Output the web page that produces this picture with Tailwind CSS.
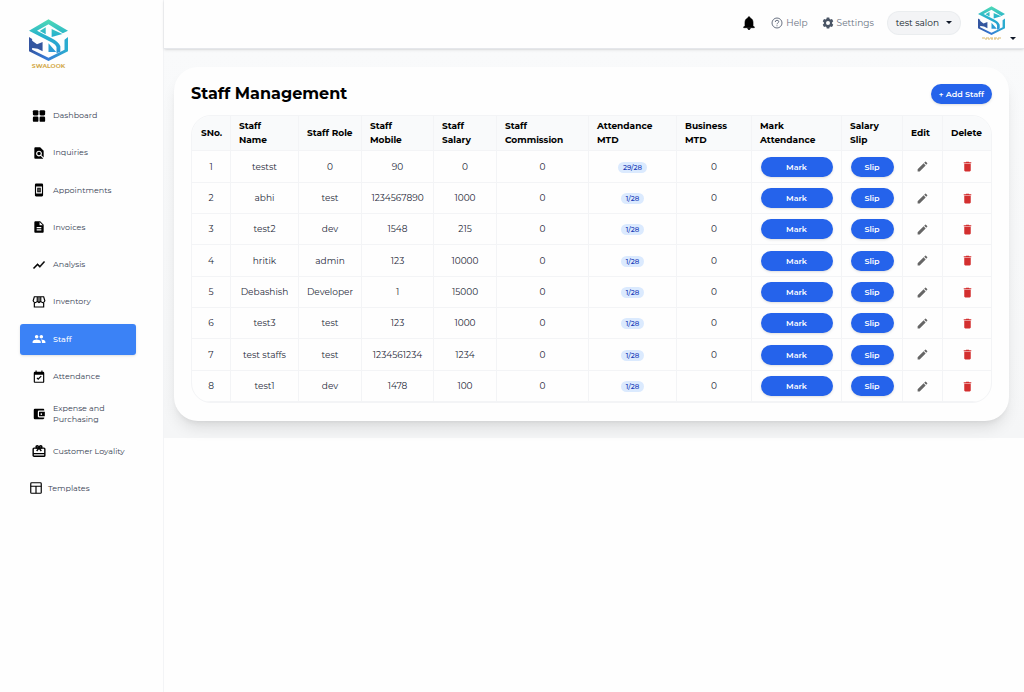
<!DOCTYPE html>
<html lang="en">
<head>
<meta charset="utf-8">
<title>Staff Management</title>
<script src="https://cdn.jsdelivr.net/npm/@tailwindcss/browser@4"></script>
</head>
<body class="min-h-screen bg-[#fefefe] font-['Montserrat','Inter',sans-serif] text-[9px] text-gray-800">
<svg class="absolute size-0" aria-hidden="true">
  <defs>
    <linearGradient id="brand" x1="0" y1="0" x2="0" y2="124" gradientUnits="userSpaceOnUse">
      <stop offset="0" stop-color="#52dcb4"/><stop offset=".4" stop-color="#27b2cc"/><stop offset=".7" stop-color="#279fd2"/><stop offset="1" stop-color="#3c86dc"/>
    </linearGradient>
    <linearGradient id="brandEdge" x1="0" y1="0" x2="112" y2="0" gradientUnits="userSpaceOnUse">
      <stop offset="0" stop-color="#34549f"/><stop offset=".45" stop-color="#3579d6"/><stop offset="1" stop-color="#2bb0cf"/>
    </linearGradient>
    <symbol id="logo" viewBox="0 0 112 126" preserveAspectRatio="none">
      <path fill="url(#brand)" d="M0 35 56 1l56 34-15 8-41-27-33 19 42 23q20 10 25 24v16l-11 5V84q-2-8-12-13z"/>
      <path fill="url(#brand)" d="M31 36l17-11v21zM65 30v24l31-9zM56 73v26h22z"/>
      <path fill="url(#brandEdge)" d="M0 54l9 6v32l47 24 46-24V62l10-8v43l-56 29L0 97z"/>
      <path fill="#34569f" d="M5 62l18 14 16-7v28l-14-8-20-3z"/>
    </symbol>
    <symbol id="pencil" viewBox="0 0 24 24"><path fill="currentColor" d="M3 17.25V21h3.75L17.81 9.94l-3.75-3.75zM20.71 7.04a1 1 0 0 0 0-1.41l-2.34-2.34a1 1 0 0 0-1.41 0l-1.83 1.83 3.75 3.75z"/></symbol>
    <symbol id="trash" viewBox="0 0 24 24"><path fill="currentColor" d="M6 19c0 1.100.9 2 2 2h8c1.100 0 2-.9 2-2V7H6zM19 4h-3.500l-1-1h-5l-1 1H5v2h14z"/></symbol>
  </defs>
</svg>

<div class="flex min-h-screen">
  <aside class="w-[164px] shrink-0 border-r border-gray-100 bg-[#fefefe]">
    <a href="#" class="ml-[29px] mt-[19px] flex w-[39px] flex-col items-center" aria-label="Swalook home">
      <svg class="h-[42px] w-[39px]"><use href="#logo"/></svg>
      <span class="mt-px text-[6px] leading-[8px] font-bold text-[#d3aa4b]">SWALOOK</span>
    </a>
    <nav class="mt-[30px] mr-[27px] ml-[20px] flex h-[404px] flex-col justify-between text-[8px] leading-[11px] text-gray-700">
      <a href="#" class="flex h-[31px] items-center gap-[7px] pl-[12px]">
        <svg class="size-[14px] shrink-0 text-black" viewBox="0 0 24 24" fill="currentColor"><rect x="1.500" y="2" width="9.500" height="9" rx="2"/><rect x="13" y="2" width="9.500" height="9" rx="2"/><rect x="1.500" y="13" width="9.500" height="9" rx="2"/><rect x="13" y="13" width="9.500" height="9" rx="2"/></svg>Dashboard</a>
      <a href="#" class="flex h-[31px] items-center gap-[7px] pl-[12px]">
        <svg class="size-[14px] shrink-0 text-black" viewBox="0 0 24 24" fill="currentColor"><path d="M20 19.590V8l-6-6H6c-1.100 0-1.990.9-1.990 2L4 20c0 1.100.89 2 1.990 2H18c.45 0 .85-.15 1.190-.4l-4.430-4.430c-.8.520-1.740.830-2.760.830-2.760 0-5-2.240-5-5s2.240-5 5-5 5 2.240 5 5c0 1.020-.31 1.960-.83 2.750zM9 13c0 1.660 1.340 3 3 3s3-1.340 3-3-1.340-3-3-3-3 1.340-3 3"/></svg>Inquiries</a>
      <a href="#" class="flex h-[31px] items-center gap-[7px] pl-[12px]">
        <svg class="size-[14px] shrink-0 text-black" viewBox="0 0 24 24" fill="currentColor"><path fill-rule="evenodd" d="M17 1H7a2 2 0 0 0-2 2v18c0 1.100.9 2 2 2h10a2 2 0 0 0 2-2V3a2 2 0 0 0-2-2M7 18V6h10v12zM9 8v8h6V8zm2 2h2v1h-2zm0 3h2v1h-2z"/></svg>Appointments</a>
      <a href="#" class="flex h-[31px] items-center gap-[7px] pl-[12px]">
        <svg class="size-[14px] shrink-0 text-black" viewBox="0 0 24 24" fill="currentColor"><path d="M14 2H6c-1.100 0-1.990.9-1.990 2L4 20c0 1.100.89 2 1.990 2H18c1.100 0 2-.9 2-2V8zm2 16H8v-2h8zm0-4H8v-2h8zm-3-5V3.500L18.500 9z"/></svg>Invoices</a>
      <a href="#" class="flex h-[31px] items-center gap-[7px] pl-[12px]">
        <svg class="size-[14px] shrink-0 text-black" viewBox="0 0 24 24" fill="currentColor" stroke="currentColor" stroke-width=".7"><path d="m3.500 18.490 6-6.010 4 4L22 6.920l-1.410-1.410-7.090 7.970-4-4L2 16.990z"/></svg>Analysis</a>
      <a href="#" class="flex h-[31px] items-center gap-[7px] pl-[12px]">
        <svg class="size-[14px] shrink-0 text-black" viewBox="0 0 24 24" fill="none" stroke="currentColor" stroke-width="2"><path d="M4 12v8.500h16V12M4 3h16l2 7q-1 3-3.500 3T15 10.500q-1 2.500-3 2.500t-3-2.500Q8 13 5.500 13T2 10zM9 3v8M12 3v9M15 3v8"/></svg>Inventory</a>
      <a href="#" aria-current="page" class="flex h-[31px] items-center gap-[7px] rounded-[3px] bg-[#3b82f6] pl-[12px] font-medium text-white shadow-sm">
        <svg class="size-[14px] shrink-0" viewBox="0 0 24 24" fill="currentColor"><path d="M16 11c1.660 0 2.990-1.340 2.990-3S17.660 5 16 5s-3 1.340-3 3 1.340 3 3 3m-8 0c1.660 0 2.990-1.340 2.990-3S9.660 5 8 5 5 6.340 5 8s1.340 3 3 3m0 2c-2.330 0-7 1.170-7 3.500V19h14v-2.500c0-2.330-4.670-3.500-7-3.500m8 0c-.29 0-.62.020-.97.050 1.160.840 1.970 1.970 1.970 3.450V19h6v-2.500c0-2.330-4.670-3.500-7-3.500"/></svg>Staff</a>
      <a href="#" class="flex h-[31px] items-center gap-[7px] pl-[12px]">
        <svg class="size-[14px] shrink-0 text-black" viewBox="0 0 24 24" fill="currentColor"><path d="m16.530 11.060-5.940 5.940-2.820-2.820 1.400-1.400 1.420 1.410 4.530-4.530zM19 3h-1V1h-2v2H8V1H6v2H5a2 2 0 0 0-2 2v15c0 1.100.9 2 2 2h14a2 2 0 0 0 2-2V5a2 2 0 0 0-2-2m0 17H5V8h14z"/></svg>Attendance</a>
      <a href="#" class="flex h-[31px] items-center gap-[7px] pl-[12px]">
        <svg class="size-[14px] shrink-0 text-black" viewBox="0 0 24 24" fill="currentColor"><path d="M21 18v1c0 1.100-.9 2-2 2H5a2 2 0 0 1-2-2V5a2 2 0 0 1 2-2h14c1.100 0 2 .9 2 2v1h-9a2 2 0 0 0-2 2v8c0 1.100.9 2 2 2zm-9-2h10V8H12zm4-2.500a1.500 1.500 0 1 1 0-3 1.500 1.500 0 0 1 0 3"/></svg><span>Expense and<br>Purchasing</span></a>
      <a href="#" class="flex h-[31px] items-center gap-[7px] pl-[12px] whitespace-nowrap">
        <svg class="size-[14px] shrink-0 text-black" viewBox="0 0 24 24" fill="none" stroke="currentColor" stroke-width="2.400"><rect x="2" y="7" width="20" height="14" rx="1.500"/><path d="M2 16.500h20M12 7 8 12M12 7l4 5"/><circle cx="9" cy="5" r="2"/><circle cx="15" cy="5" r="2"/></svg>Customer Loyality</a>
      <a href="#" class="flex h-[31px] items-center gap-[5px] pl-[9px]">
        <svg class="size-[14px] shrink-0 text-black" viewBox="0 0 24 24" fill="none" stroke="currentColor" stroke-width="2"><rect x="3" y="3" width="18" height="18" rx="1.500"/><path d="M3 9h18M12 9v12"/></svg>Templates</a>
    </nav>
  </aside>

  <div class="min-w-0 flex-1">
    <header class="relative flex h-[49px] items-center justify-end border-b border-gray-200 bg-[#fefefe] pr-[8px] pb-[3px] text-[9px] text-gray-500 shadow-sm">
      <button type="button" aria-label="Notifications" class="mr-[14px] text-black"><svg class="size-[16px]" viewBox="0 0 24 24" fill="currentColor"><path d="M12 22c1.100 0 2-.9 2-2h-4c0 1.100.9 2 2 2m6-6v-5c0-3.070-1.630-5.640-4.500-6.320V4a1.500 1.500 0 0 0-3 0v.68C7.640 5.360 6 7.920 6 11v5l-2 2v1h16v-1z" stroke="currentColor"/></svg></button>
      <a href="#" class="mr-[14px] flex items-center gap-[3px]"><svg class="size-[12px]" viewBox="0 0 24 24" fill="none" stroke="currentColor" stroke-width="2"><circle cx="12" cy="12" r="10"/><path d="M8.500 10q0-3.500 3.500-3.500t3.500 3c0 2.300-3.500 2.500-3.500 5M12 16.500v2"/></svg>Help</a>
      <a href="#" class="mr-[13px] flex items-center gap-[3px]"><svg class="size-[12px] text-gray-600" viewBox="0 0 24 24" fill="currentColor"><path fill-rule="evenodd" d="m9.500 1-.7 3.200-1.700 1L4 4.200 1.500 8.500 3.900 11v2l-2.400 2.500L4 19.800l3.100-1 1.700 1 .7 3.200h5l.7-3.200 1.700-1 3.100 1 2.500-4.300-2.400-2.500v-2l2.400-2.500L20 4.200l-3.100 1-1.700-1-.7-3.200zM12 8a4 4 0 1 1 0 8 4 4 0 0 1 0-8"/></svg>Settings</a>
      <button type="button" class="mr-[17px] flex h-[24px] items-center gap-[7px] rounded-full border border-gray-200/60 bg-gray-100 px-[8px] text-gray-900">test salon<span class="border-x-[3px] border-t-[3px] border-x-transparent border-t-gray-900"></span></button>
      <button type="button" aria-label="Account" class="flex items-end gap-[5px]">
        <span class="flex flex-col items-center"><svg class="h-[29px] w-[27px]"><use href="#logo"/></svg><svg class="mt-[2px] h-[3px] w-[20px]" viewBox="0 0 20 3" fill="none" stroke="#dcb96a"><path d="M0 1h20" stroke-dasharray="3 1"/><path d="M3 2h14" stroke-dasharray="2 1"/></svg></span>
        <span class="border-x-[3px] border-t-[3px] border-x-transparent border-t-gray-900"></span>
      </button>
    </header>

    <main class="bg-gradient-to-b from-[#f9fafb] to-[#f5f6f7] pt-[18px] pr-[15px] pb-[17px] pl-[10px]">
      <section class="rounded-[24px] bg-[#fefefe] px-[17px] pt-[17px] pb-[18px] shadow-lg">
        <div class="mb-[11px] flex h-[20px] items-center justify-between">
          <h1 class="text-base leading-[18px] font-bold text-black">Staff Management</h1>
          <button type="button" class="h-[20px] rounded-full bg-[#2563eb] px-[8px] text-[8px] font-semibold text-white shadow">+ Add Staff</button>
        </div>
        <div class="overflow-hidden rounded-[20px] border border-gray-100">
          <table class="w-full table-fixed border-separate border-spacing-0">
            <colgroup><col class="w-[39px]"><col class="w-[68px]"><col class="w-[63px]"><col class="w-[72px]"><col class="w-[63px]"><col class="w-[92px]"><col class="w-[88px]"><col class="w-[75px]"><col class="w-[90px]"><col class="w-[61px]"><col class="w-[40px]"><col class="w-[48px]"></colgroup>
            <thead class="bg-gray-50 text-left leading-[14px] text-black">
              <tr id="head" class="h-[35px]"></tr>
            </thead>
            <tbody id="rows" class="text-center"></tbody>
          </table>
        </div>
      </section>
    </main>
  </div>
</div>
<script>
const heads = ["SNo.","Staff<br>Name","Staff Role","Staff<br>Mobile","Staff<br>Salary","Staff<br>Commission","Attendance<br>MTD","Business<br>MTD","Mark<br>Attendance","Salary<br>Slip","Edit","Delete"];
document.getElementById("head").innerHTML = heads.map(h => `<th scope="col" class="border-r border-b border-gray-100 pl-[8px] font-bold whitespace-nowrap first:pl-[9px] last:border-r-0">${h}</th>`).join("");
const staff = [
  ["testst","0","90","0","29/28"],["abhi","test","1234567890","1000","1/28"],["test2","dev","1548","215","1/28"],["hritik","admin","123","10000","1/28"],
  ["Debashish","Developer","1","15000","1/28"],["test3","test","123","1000","1/28"],["test staffs","test","1234561234","1234","1/28"],["test1","dev","1478","100","1/28"]
];
const cell = c => `<td class="border-r border-b border-gray-100 last:border-r-0">${c}</td>`;
document.getElementById("rows").innerHTML = staff.map((s, i) => `<tr class="h-[31px] nth-[3n+1]:h-[32px]">` + [
  i + 1, s[0], s[1], s[2], s[3], "0",
  `<span class="inline-block rounded-full bg-blue-100 px-[5px] text-[7px] leading-[11px] font-medium text-blue-800">${s[4]}</span>`,
  "0",
  `<button type="button" class="mx-auto block h-[20px] w-[72px] rounded-full bg-[#2563eb] text-[8px] font-semibold text-white shadow">Mark</button>`,
  `<button type="button" class="mx-auto block h-[20px] w-[43px] rounded-full bg-[#2563eb] text-[8px] font-semibold text-white shadow">Slip</button>`,
  `<button type="button" aria-label="Edit ${s[0]}" class="mx-auto block text-[#666]"><svg class="size-[13px]"><use href="#pencil"/></svg></button>`,
  `<button type="button" aria-label="Delete ${s[0]}" class="mx-auto block text-[#d32f2f]"><svg class="size-[13px]"><use href="#trash"/></svg></button>`
].map(cell).join("") + "</tr>").join("");
</script>
</body>
</html>
